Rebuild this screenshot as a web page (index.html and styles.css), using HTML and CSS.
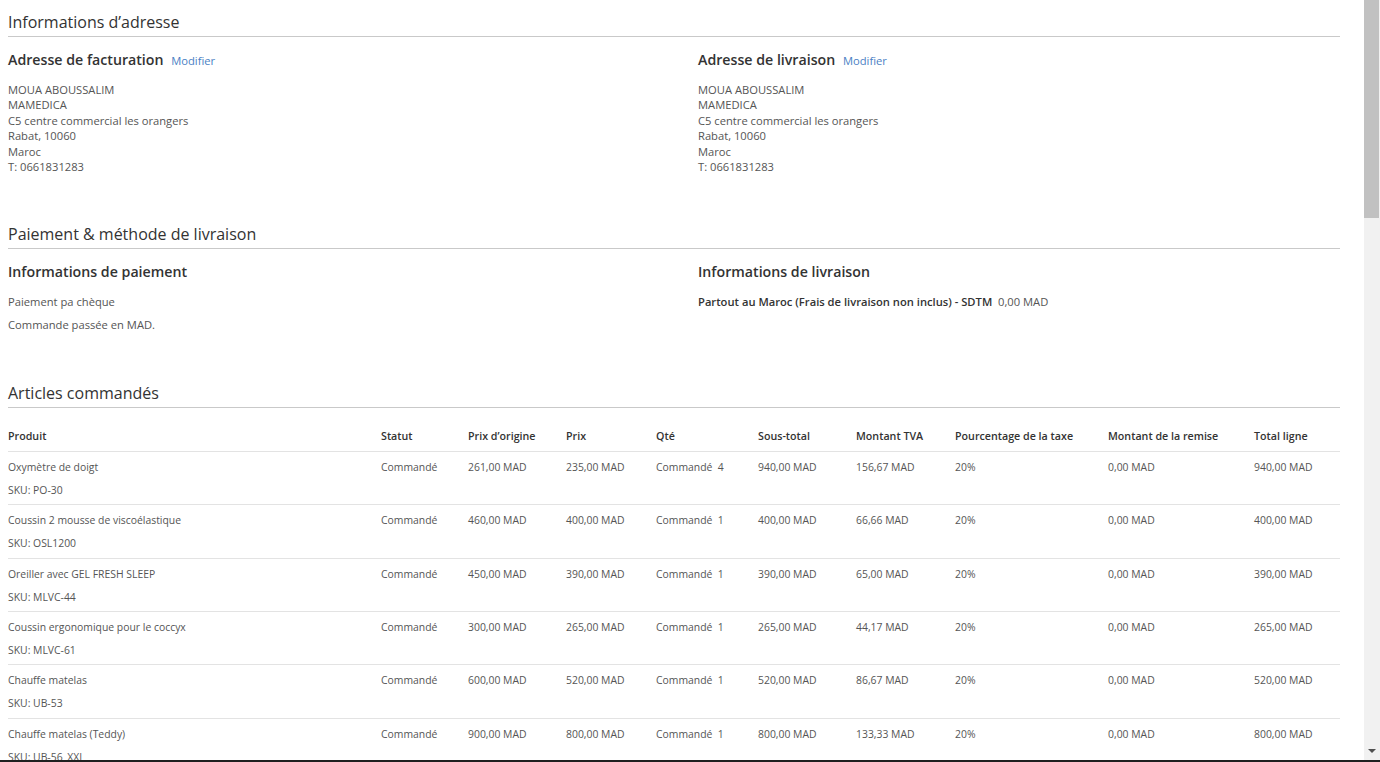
FILE: index.html
```html
<!DOCTYPE html>
<html lang="fr">
<head>
<meta charset="utf-8">
<title>Commande</title>
<link rel="stylesheet" href="styles.css">
</head>
<body>
<div class="screen">
  <div class="viewport">
    <main class="page">
      <section class="section">
        <h2 class="section-title">Informations d’adresse</h2>
        <div class="cols">
          <div class="col">
            <h3 class="item-title">Adresse de facturation <a class="edit" href="#">Modifier</a></h3>
            <address class="addr">MOUA ABOUSSALIM<br>MAMEDICA<br>C5 centre commercial les orangers<br>Rabat, 10060<br>Maroc<br>T: 0661831283</address>
          </div>
          <div class="col">
            <h3 class="item-title">Adresse de livraison <a class="edit" href="#">Modifier</a></h3>
            <address class="addr">MOUA ABOUSSALIM<br>MAMEDICA<br>C5 centre commercial les orangers<br>Rabat, 10060<br>Maroc<br>T: 0661831283</address>
          </div>
        </div>
      </section>

      <section class="section">
        <h2 class="section-title">Paiement &amp; méthode de livraison</h2>
        <div class="cols">
          <div class="col">
            <h3 class="item-title">Informations de paiement</h3>
            <p class="line">Paiement pa chèque</p>
            <p class="line">Commande passée en MAD.</p>
          </div>
          <div class="col">
            <h3 class="item-title">Informations de livraison</h3>
            <p class="line"><strong>Partout au Maroc (Frais de livraison non inclus) - SDTM</strong>&nbsp; 0,00 MAD</p>
          </div>
        </div>
      </section>

      <section class="section">
        <h2 class="section-title">Articles commandés</h2>
        <table class="items">
          <colgroup>
            <col class="c-prod"><col class="c-stat"><col class="c-orig"><col class="c-prix"><col class="c-qty"><col class="c-sub"><col class="c-tva"><col class="c-pct"><col class="c-rem"><col class="c-tot">
          </colgroup>
          <thead>
            <tr><th>Produit</th><th>Statut</th><th>Prix d’origine</th><th>Prix</th><th>Qté</th><th>Sous-total</th><th>Montant TVA</th><th>Pourcentage de la taxe</th><th>Montant de la remise</th><th>Total ligne</th></tr>
          </thead>
          <tbody>
            <tr><td><div>Oxymètre de doigt</div><div class="sku">SKU: PO-30</div></td><td>Commandé</td><td>261,00 MAD</td><td>235,00 MAD</td><td>Commandé&nbsp; 4</td><td>940,00 MAD</td><td>156,67 MAD</td><td>20%</td><td>0,00 MAD</td><td>940,00 MAD</td></tr>
            <tr><td><div>Coussin 2 mousse de viscoélastique</div><div class="sku">SKU: OSL1200</div></td><td>Commandé</td><td>460,00 MAD</td><td>400,00 MAD</td><td>Commandé&nbsp; 1</td><td>400,00 MAD</td><td>66,66 MAD</td><td>20%</td><td>0,00 MAD</td><td>400,00 MAD</td></tr>
            <tr><td><div>Oreiller avec GEL FRESH SLEEP</div><div class="sku">SKU: MLVC-44</div></td><td>Commandé</td><td>450,00 MAD</td><td>390,00 MAD</td><td>Commandé&nbsp; 1</td><td>390,00 MAD</td><td>65,00 MAD</td><td>20%</td><td>0,00 MAD</td><td>390,00 MAD</td></tr>
            <tr><td><div>Coussin ergonomique pour le coccyx</div><div class="sku">SKU: MLVC-61</div></td><td>Commandé</td><td>300,00 MAD</td><td>265,00 MAD</td><td>Commandé&nbsp; 1</td><td>265,00 MAD</td><td>44,17 MAD</td><td>20%</td><td>0,00 MAD</td><td>265,00 MAD</td></tr>
            <tr><td><div>Chauffe matelas</div><div class="sku">SKU: UB-53</div></td><td>Commandé</td><td>600,00 MAD</td><td>520,00 MAD</td><td>Commandé&nbsp; 1</td><td>520,00 MAD</td><td>86,67 MAD</td><td>20%</td><td>0,00 MAD</td><td>520,00 MAD</td></tr>
            <tr><td><div>Chauffe matelas (Teddy)</div><div class="sku">SKU: UB-56_XXL</div></td><td>Commandé</td><td>900,00 MAD</td><td>800,00 MAD</td><td>Commandé&nbsp; 1</td><td>800,00 MAD</td><td>133,33 MAD</td><td>20%</td><td>0,00 MAD</td><td>800,00 MAD</td></tr>
          </tbody>
        </table>
      </section>
    </main>
    <div class="scrollbar">
      <div class="thumb"></div>
      <div class="track"></div>
      <div class="arrow"></div>
    </div>
  </div>
  <div class="taskbar"></div>
</div>
</body>
</html>
```

FILE: styles.css
```css
* { box-sizing: border-box; }
html, body { margin: 0; padding: 0; height: 100%; overflow: hidden; background: #fff; }
body { font-family: "Open Sans", "DejaVu Sans", sans-serif; color: #555; font-size: 11.2px; }

.screen { display: flex; flex-direction: column; height: 762px; }
.viewport { display: flex; flex: 0 0 760px; height: 760px; overflow: hidden; }
.taskbar { flex: 0 0 2px; background: #1f1f1f; }

.page { flex: 0 0 1364px; padding: 0 24px 0 8px; overflow: hidden; }

.section { margin-bottom: 50px; }
.section-title {
  margin: 12px 0 0;
  font-size: 16px;
  line-height: 20px;
  font-weight: 400;
  color: #333;
  padding-bottom: 4px;
  border-bottom: 1px solid #c9c9c9;
}
.cols { display: grid; grid-template-columns: 1fr 1fr; column-gap: 48px; }
.item-title {
  margin: 14px 0 0;
  font-size: 14.2px;
  line-height: 18px;
  font-weight: 600;
  color: #333;
}
.edit { font-size: 11.2px; font-weight: 400; color: #4b7fc4; text-decoration: none; margin-left: 4px; }
.addr { font-style: normal; margin-top: 12px; line-height: 15.4px; }
.line { margin: 13px 0 0; line-height: 15.4px; }
.line + .line { margin-top: 7.6px; }
.line strong { font-weight: 600; color: #333; }

.items { width: 100%; border-collapse: collapse; table-layout: fixed; margin-top: 13px; }
.c-prod { width: 373px; }
.c-stat { width: 87px; }
.c-orig { width: 98px; }
.c-prix { width: 90px; }
.c-qty { width: 102px; }
.c-sub { width: 98px; }
.c-tva { width: 99px; }
.c-pct { width: 153px; }
.c-rem { width: 146px; }
.c-tot { width: 86px; }
.items th {
  text-align: left;
  font-weight: 600;
  font-size: 10.7px;
  color: #333;
  line-height: 15px;
  padding: 8px 0 7px;
  border-bottom: 1px solid #e3e3e3;
  white-space: nowrap;
}
.items td {
  vertical-align: top;
  font-size: 10.4px;
  line-height: 15px;
  padding: 8px 0 6.4px;
  border-bottom: 1px solid #e3e3e3;
  white-space: nowrap;
}
.sku { margin-top: 8px; }

.scrollbar { flex: 0 0 16px; display: flex; flex-direction: column; background: #f1f1f1; }
.thumb { height: 218px; background: #c1c1c1; margin-right: 1px; }
.track { flex: 1; }
.arrow {
  width: 0; height: 0;
  margin: 0 auto 7px;
  border-left: 4px solid transparent;
  border-right: 4px solid transparent;
  border-top: 4px solid #505050;
}
```
